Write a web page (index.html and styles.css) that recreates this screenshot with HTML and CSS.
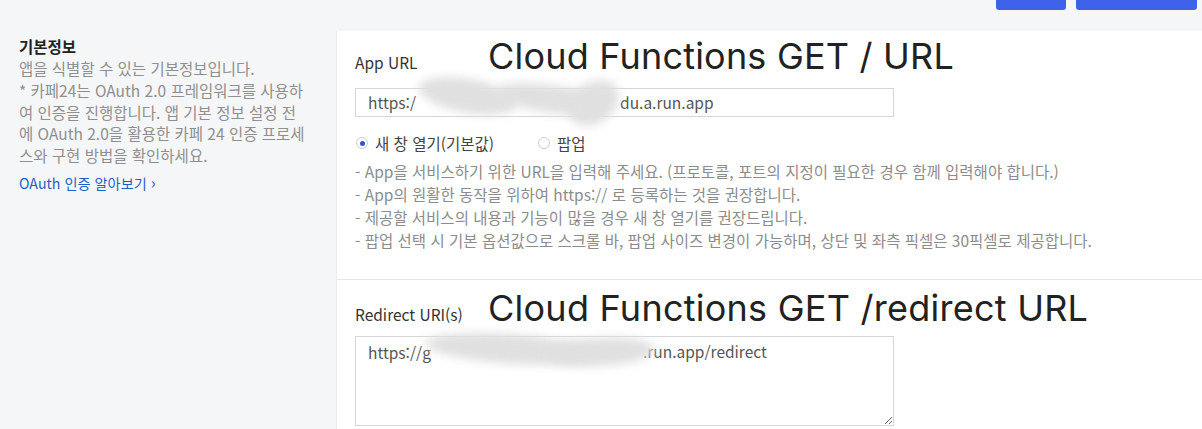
FILE: index.html
```html
<!DOCTYPE html>
<html lang="ko">
<head>
<meta charset="utf-8">
<link rel="stylesheet" href="styles.css">
</head>
<body>
<div class="topbar">
  <span class="btn btn-a"></span>
  <span class="btn btn-b"></span>
</div>
<div class="main">
  <aside class="aside">
    <h2 class="aside-title">기본정보</h2>
    <p class="aside-desc">앱을 식별할 수 있는 기본정보입니다.<br>* 카페24는 OAuth 2.0 프레임워크를 사용하<br>여 인증을 진행합니다. 앱 기본 정보 설정 전<br>에 OAuth 2.0을 활용한 카페 24 인증 프로세<br>스와 구현 방법을 확인하세요.</p>
    <a class="aside-link" href="#">OAuth 인증 알아보기 <span class="chev">›</span></a>
  </aside>
  <section class="card">
    <div class="field field-first">
      <div class="label-row">
        <span class="label">App URL</span>
        <span class="note">Cloud Functions GET / URL</span>
      </div>
      <div class="input">
        <span class="val">https:/</span><span class="val val-end">du.a.run.app</span>
        <span class="blur blur1"></span>
        <span class="blur blur2"></span>
        <span class="blur blur3"></span>
      </div>
      <div class="radios">
        <label class="radio"><span class="dot on"></span>새 창 열기(기본값)</label>
        <label class="radio"><span class="dot"></span>팝업</label>
      </div>
      <ul class="help">
        <li>- App을 서비스하기 위한 URL을 입력해 주세요. (프로토콜, 포트의 지정이 필요한 경우 함께 입력해야 합니다.)</li>
        <li>- App의 원활한 동작을 위하여 https:// 로 등록하는 것을 권장합니다.</li>
        <li>- 제공할 서비스의 내용과 기능이 많을 경우 새 창 열기를 권장드립니다.</li>
        <li>- 팝업 선택 시 기본 옵션값으로 스크롤 바, 팝업 사이즈 변경이 가능하며, 상단 및 좌측 픽셀은 30픽셀로 제공합니다.</li>
      </ul>
    </div>
    <div class="field field-second">
      <div class="label-row">
        <span class="label">Redirect URI(s)</span>
        <span class="note note2">Cloud Functions GET /redirect URL</span>
      </div>
      <div class="area-wrap">
        <textarea class="area" readonly>https://g</textarea>
        <span class="area-end">.run.app/redirect</span>
        <span class="blur blur4"></span>
        <span class="blur blur5"></span>
      </div>
    </div>
  </section>
</div>
</body>
</html>
```
FILE: styles.css
```css
* { box-sizing: border-box; }
html, body { margin: 0; padding: 0; }
body {
  background: #f5f6f8;
  font-family: "Noto Sans CJK KR", "Noto Sans", sans-serif;
  color: #333;
  width: 1202px;
  height: 429px;
  overflow: hidden;
}
.topbar {
  height: 31px;
  display: flex;
  justify-content: flex-end;
  align-items: flex-start;
  gap: 10px;
  padding-right: 5px;
}
.btn {
  display: block;
  height: 10px;
  background: #3e63ea;
  border-radius: 0 0 3px 3px;
}
.btn-a { width: 70px; }
.btn-b { width: 121px; }
.main {
  display: flex;
  align-items: stretch;
}
.aside {
  width: 336px;
  flex: none;
  padding: 5px 10px 0 19px;
}
.aside-title {
  margin: 0;
  font-size: 15.5px;
  font-weight: 700;
  line-height: 20px;
  color: #222;
}
.aside-desc {
  margin: 2px 0 0;
  font-size: 15.5px;
  line-height: 21.8px;
  color: #8f8f8f;
  white-space: nowrap;
}
.aside-link {
  display: inline-block;
  margin-top: 5px;
  font-size: 14.2px;
  line-height: 20px;
  color: #1f5ec9;
  text-decoration: none;
}
.chev { font-size: 16px; }
.card {
  flex: 1;
  background: #fff;
  border-left: 1px solid #ececec;
  height: 400px;
}
.field { padding-left: 18px; }
.field-first {
  padding-top: 5px;
  padding-bottom: 27px;
  border-bottom: 1px solid #e6e6e6;
}
.field-second { padding-top: 8px; }
.label-row {
  display: flex;
  align-items: baseline;
  height: 40px;
}
.label {
  width: 133px;
  flex: none;
  font-size: 15.5px;
  line-height: 20px;
  color: #333;
}
.note {
  font-family: Inter, "Noto Sans", sans-serif;
  font-size: 36px;
  line-height: 40px;
  color: #222;
  white-space: nowrap;
  letter-spacing: 0.2px;
}
.note2 { letter-spacing: 0.25px; }
.input {
  position: relative;
  margin-top: 12px;
  width: 539px;
  height: 29px;
  border: 1px solid #d6d6d6;
  padding-left: 12px;
  font-size: 15.5px;
  line-height: 27px;
  color: #555;
  display: flex;
}
.val-end { margin-left: 204px; }
.blur {
  position: absolute;
  background: #e0e0e0;
  border-radius: 50%;
  filter: blur(5px);
}
.blur1 { left: 62px; top: -10px; width: 100px; height: 34px; transform: rotate(10deg); }
.blur2 { left: 140px; top: -4px; width: 110px; height: 28px; transform: rotate(8deg); }
.blur3 { left: 210px; top: -6px; width: 55px; height: 40px; transform: rotate(-35deg); }
.radios {
  display: flex;
  gap: 43px;
  margin-top: 15px;
  height: 22px;
  align-items: center;
}
.radio {
  display: flex;
  align-items: center;
  font-size: 15.5px;
  line-height: 20px;
  color: #444;
}
.dot {
  width: 12px;
  height: 12px;
  border-radius: 50%;
  border: 1px solid #cfcfcf;
  margin: 0 7px 0 1px;
  position: relative;
  background: #fff;
}
.dot.on::after {
  content: "";
  position: absolute;
  left: 2.5px;
  top: 2.5px;
  width: 5px;
  height: 5px;
  border-radius: 50%;
  background: #2f55d4;
}
.help {
  list-style: none;
  margin: 6px 0 0;
  padding: 0;
  font-size: 15.5px;
  line-height: 23px;
  color: #8c8c8c;
  white-space: nowrap;
}
.area-wrap {
  position: relative;
  margin-top: 8px;
  width: 539px;
  height: 90px;
}
.area {
  display: block;
  width: 539px;
  height: 90px;
  border: 1px solid #d6d6d6;
  border-radius: 0;
  padding: 5px 12px;
  font-family: "Noto Sans CJK KR", "Noto Sans", sans-serif;
  font-size: 15.5px;
  line-height: 20px;
  color: #555;
  overflow: hidden;
  outline: none;
  resize: vertical;
}
.area-end {
  position: absolute;
  left: 288px;
  top: 5px;
  font-size: 15.5px;
  line-height: 20px;
  color: #555;
}
.blur4 { left: 70px; top: -2px; width: 170px; height: 30px; transform: rotate(4deg); }
.blur5 { left: 190px; top: 2px; width: 110px; height: 28px; transform: rotate(-3deg); }
```
